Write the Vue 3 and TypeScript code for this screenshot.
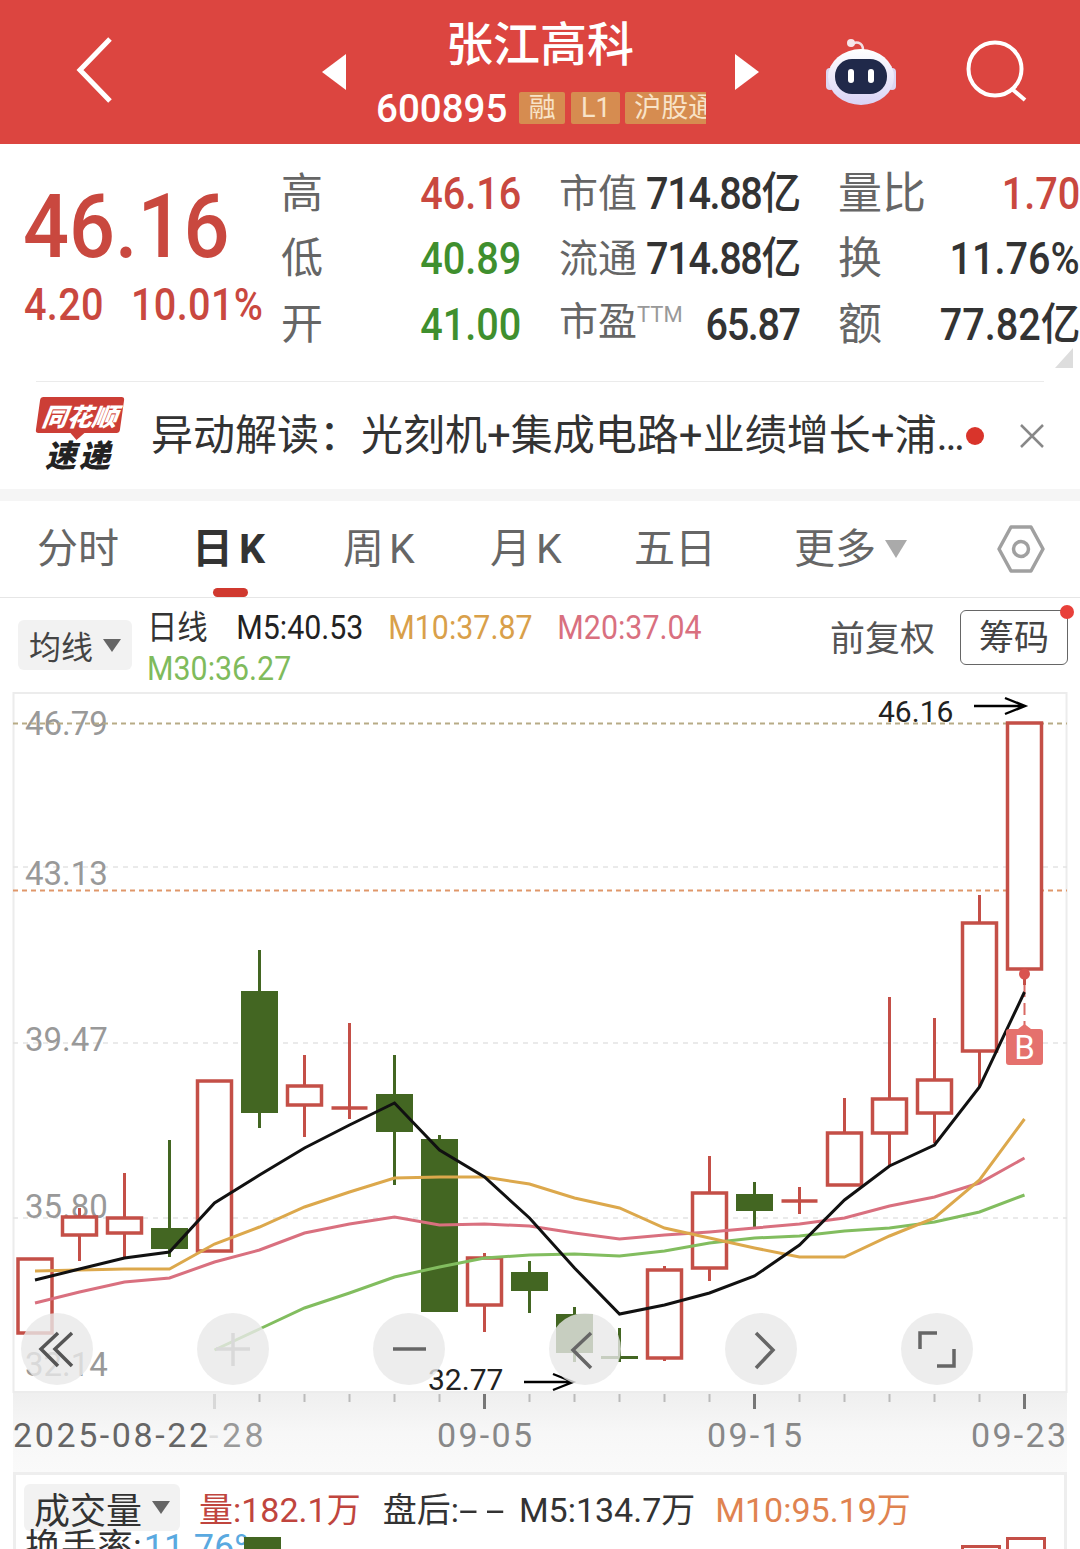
<script setup lang="ts">
interface Candle { x: number; up: boolean; top: number; bot: number; hi: number; lo: number }
const xs = [35, 79.5, 124.5, 169.5, 214.5, 259.5, 304.5, 349.5, 394.5, 439.5, 484.5, 529.5, 574.5, 619.5, 664.5, 709.5, 754.5, 799.5, 844.5, 889.5, 934.5, 979.5, 1024.5]
const raw: [boolean, number, number, number, number][] = [
  [true, 1259, 1333, 1259, 1333],
  [true, 1217, 1235, 1208, 1261],
  [true, 1218, 1233, 1173, 1258],
  [false, 1228, 1249, 1140, 1257],
  [true, 1081, 1251, 1081, 1251],
  [false, 991, 1113, 950, 1128],
  [true, 1086, 1105, 1055, 1137],
  [true, 1108, 1108, 1023, 1119],
  [false, 1094, 1132, 1055, 1185],
  [false, 1139, 1312, 1135, 1312],
  [true, 1258, 1305, 1253, 1332],
  [false, 1272, 1291, 1261, 1313],
  [false, 1314, 1353, 1307, 1362],
  [false, 1356, 1356, 1328, 1362],
  [true, 1270, 1358, 1266, 1361],
  [true, 1193, 1268, 1156, 1281],
  [false, 1194, 1211, 1182, 1227],
  [true, 1201, 1201, 1187, 1214],
  [true, 1133, 1185, 1098, 1185],
  [true, 1099, 1133, 997, 1166],
  [true, 1080, 1113, 1018, 1143],
  [true, 923, 1051, 895, 1087],
  [true, 723, 969, 723, 985],
]
const candles: Candle[] = raw.map((r, i) => ({ x: xs[i], up: r[0], top: r[1], bot: r[2], hi: r[3], lo: r[4] }))

const toPts = (ys: number[], from = 0) => ys.map((y, i) => `${xs[i + from]},${y}`).join(' ')
const m5 = toPts([1280, 1269, 1258, 1252, 1203, 1175, 1148, 1125, 1103, 1150, 1177, 1218, 1268, 1314, 1305, 1293, 1276, 1245, 1200, 1166, 1145, 1087, 992])
const m10 = toPts([1271, 1270, 1269, 1269, 1244, 1227, 1207, 1192, 1178, 1177, 1177, 1184, 1198, 1208, 1228, 1238, 1248, 1257, 1257, 1236, 1218, 1180, 1119])
const m20 = toPts([1303, 1292, 1282, 1278, 1262, 1250, 1233, 1224, 1217, 1225, 1224, 1226, 1233, 1239, 1235, 1232, 1228, 1224, 1218, 1206, 1197, 1183, 1158])
const m30 = toPts([1350, 1329, 1308, 1293, 1277, 1267, 1258, 1255, 1254, 1256, 1251, 1243, 1238, 1236, 1231, 1228, 1222, 1212, 1195], 4)

const ticks = xs.slice(4).map((x, i) => ({ x, major: (i % 6 === 0) }))
const yLabels = [
  { t: '46.79', y: 735 }, { t: '43.13', y: 885 }, { t: '39.47', y: 1051 }, { t: '35.80', y: 1218 }, { t: '32.14', y: 1376 },
]
const circles = [57, 233, 409, 585, 761, 937]
const stats = [
  [{ l: '高', v: '46.16', c: 'red' }, { l: '市值', v: '714.88亿', c: 'dark' }, { l: '量比', v: '1.70', c: 'red' }],
  [{ l: '低', v: '40.89', c: 'green' }, { l: '流通', v: '714.88亿', c: 'dark' }, { l: '换', v: '11.76%', c: 'dark' }],
  [{ l: '开', v: '41.00', c: 'green' }, { l: '市盈', v: '65.87', c: 'dark', sup: 'TTM' }, { l: '额', v: '77.82亿', c: 'dark' }],
]
</script>

<template>
  <div class="page">
    <header class="top">
      <svg class="back" width="38" height="66" viewBox="0 0 38 66"><polyline points="34,2 4,33 34,64" fill="none" stroke="#fff" stroke-width="5" /></svg>
      <span class="tri left"></span>
      <div class="center">
        <div class="title">张江高科</div>
        <div class="sub">
          <span class="code">600895</span>
          <span class="tag">融</span><span class="tag l1">L1</span><span class="tag hk">沪股通</span>
        </div>
      </div>
      <span class="tri right"></span>
      <svg class="bot" width="72" height="68" viewBox="0 0 72 68">
        <defs>
          <linearGradient id="hd" x1="0" y1="0" x2="0" y2="1"><stop offset="0" stop-color="#fff" /><stop offset="1" stop-color="#d9d3f5" /></linearGradient>
        </defs>
        <path d="M26 8 C30 2 38 4 38 12" fill="none" stroke="#f3dfe4" stroke-width="2.5" />
        <circle cx="26" cy="5" r="4" fill="#f6e6ea" />
        <rect x="1" y="30" width="8" height="22" rx="4" fill="#dcd6f2" />
        <rect x="63" y="30" width="8" height="22" rx="4" fill="#dcd6f2" />
        <ellipse cx="36" cy="39" rx="33" ry="28" fill="url(#hd)" />
        <rect x="10" y="21" width="52" height="35" rx="17" fill="#20294a" />
        <rect x="23" y="31" width="6" height="14" rx="3" fill="#fff" />
        <rect x="43" y="31" width="6" height="14" rx="3" fill="#fff" />
      </svg>
      <svg class="search" width="62" height="66" viewBox="0 0 62 66"><circle cx="29" cy="32" r="26.5" fill="none" stroke="#fff" stroke-width="4" /><line x1="46" y1="52" x2="59" y2="63" stroke="#fff" stroke-width="4" /></svg>
    </header>

    <section class="stats">
      <div class="price">
        <div class="big">46.16</div>
        <div class="chg"><span>4.20</span><span>10.01%</span></div>
      </div>
      <div class="grid">
        <template v-for="(row, i) in stats" :key="i">
          <div v-for="cell in row" :key="cell.l" class="cell">
            <span class="lab">{{ cell.l }}<sup v-if="cell.sup">{{ cell.sup }}</sup></span>
            <span class="val" :class="cell.c">{{ cell.v }}</span>
          </div>
        </template>
      </div>
      <span class="corner"></span>
    </section>

    <div class="rule"></div>

    <section class="news">
      <div class="logo">
        <div class="bubble"><span>同花顺</span></div>
        <div class="speed">速递</div>
      </div>
      <div class="headline">异动解读：光刻机+集成电路+业绩增长+浦…</div>
      <span class="dot"></span>
      <svg class="close" width="26" height="26" viewBox="0 0 26 26"><path d="M2 2 L24 24 M24 2 L2 24" stroke="#888" stroke-width="2.5" /></svg>
    </section>

    <nav class="tabs">
      <span class="tab">分时</span>
      <span class="tab active ks">日K<i class="bar"></i></span>
      <span class="tab ks">周K</span>
      <span class="tab ks">月K</span>
      <span class="tab">五日</span>
      <span class="tab more">更多<i class="caret"></i></span>
      <svg class="hex" width="50" height="50" viewBox="0 0 50 50">
        <path d="M15 3 H35 L47 25 L35 47 H15 L3 25 Z" fill="none" stroke="#a0a0a0" stroke-width="3.5" stroke-linejoin="round" />
        <circle cx="25" cy="25" r="7.5" fill="none" stroke="#a0a0a0" stroke-width="3.5" />
      </svg>
    </nav>

    <section class="legend">
      <div class="pill">均线<i class="caret dark"></i></div>
      <div class="mas">
        <span class="ri">日线</span>
        <span class="m5">M5:40.53</span>
        <span class="m10">M10:37.87</span>
        <span class="m20">M20:37.04</span>
        <span class="m30">M30:36.27</span>
      </div>
      <span class="fq">前复权</span>
      <span class="chip">筹码<i class="reddot"></i></span>
    </section>

    <svg class="chart" width="1080" height="780" viewBox="0 692 1080 780">
      <defs>
        <linearGradient id="band" x1="0" y1="0" x2="0" y2="1"><stop offset="0" stop-color="#efefef" /><stop offset="0.5" stop-color="#f7f7f7" /><stop offset="1" stop-color="#fafafa" /></linearGradient>
      </defs>
      <rect x="13" y="1393" width="1054" height="79" fill="url(#band)" />
      <rect x="13.5" y="693" width="1053" height="699" fill="#fff" stroke="#ececec" stroke-width="2" />
      <line x1="13" x2="1067" y1="867" y2="867" stroke="#e4e4e4" stroke-width="1.5" stroke-dasharray="5 5" />
      <line x1="13" x2="1067" y1="1043" y2="1043" stroke="#e4e4e4" stroke-width="1.5" stroke-dasharray="5 5" />
      <line x1="13" x2="1067" y1="1218" y2="1218" stroke="#e4e4e4" stroke-width="1.5" stroke-dasharray="5 5" />
      <text v-for="l in yLabels" :key="l.t" x="25" :y="l.y" class="ylab">{{ l.t }}</text>
      <line x1="13" x2="1067" y1="723.5" y2="723.5" stroke="#b7ab86" stroke-width="2" stroke-dasharray="5 4" />
      <line x1="13" x2="1067" y1="890.5" y2="890.5" stroke="#e0976a" stroke-width="2" stroke-dasharray="5 4" />

      <g v-for="(c, i) in candles" :key="i">
        <template v-if="c.up">
          <line :x1="c.x" :x2="c.x" :y1="c.hi" :y2="c.lo" stroke="#c44f47" stroke-width="3" />
          <line v-if="c.top === c.bot" :x1="c.x - 18" :x2="c.x + 18" :y1="c.top" :y2="c.top" stroke="#c44f47" stroke-width="3.5" />
          <rect v-else :x="c.x - 17" :y="c.top" width="34" :height="c.bot - c.top" fill="#fff" stroke="#c44f47" stroke-width="3.5" />
        </template>
        <template v-else>
          <line :x1="c.x" :x2="c.x" :y1="c.hi" :y2="c.lo" stroke="#436622" stroke-width="3" />
          <rect :x="c.x - 18.5" :y="c.top" width="37" :height="Math.max(c.bot - c.top, 3)" fill="#436622" />
        </template>
      </g>

      <line x1="1024.5" x2="1024.5" y1="985" y2="1030" stroke="#d96a64" stroke-width="2" stroke-dasharray="12 6" />
      <circle cx="1024.5" cy="974" r="5.5" fill="#d9534f" />
      <polyline :points="m30" fill="none" stroke="#82bd5f" stroke-width="3" />
      <polyline :points="m20" fill="none" stroke="#d9707f" stroke-width="3" />
      <polyline :points="m10" fill="none" stroke="#dca84c" stroke-width="3" />
      <polyline :points="m5" fill="none" stroke="#111" stroke-width="3" />

      <path d="M1024.5 1024 L1031 1029 H1040 Q1043 1029 1043 1032 V1062 Q1043 1065 1040 1065 H1009 Q1006 1065 1006 1062 V1032 Q1006 1029 1009 1029 H1018 Z" fill="#e5716d" />
      <text x="1024.5" y="1059" class="blab">B</text>

      <text x="878" y="722" class="mark">46.16</text>
      <path d="M974 706 H1024 M1005 698 L1025 706 L1005 714" fill="none" stroke="#000" stroke-width="2.4" />
      <text x="428" y="1390" class="mark">32.77</text>
      <path d="M524 1382 H572 M553 1374 L573 1382 L553 1390" fill="none" stroke="#000" stroke-width="2.4" />

      <circle v-for="cx in circles" :key="cx" :cx="cx" cy="1349" r="36" fill="#e8e8e8" fill-opacity="0.8" />
      <path d="M58 1333 L41 1349 L58 1366 M72 1333 L55 1349 L72 1366" fill="none" stroke="#555" stroke-width="3.5" />
      <path d="M233 1333 V1366 M216 1349 H250" stroke="#d9d9d9" stroke-width="3.5" />
      <path d="M393 1349 H426" stroke="#666" stroke-width="3.5" />
      <path d="M591 1333 L573 1350 L591 1368" fill="none" stroke="#666" stroke-width="3.5" />
      <path d="M756 1333 L773 1350 L756 1368" fill="none" stroke="#666" stroke-width="3.5" />
      <path d="M920 1349 V1333 H937 M954 1349 V1366 H937" fill="none" stroke="#666" stroke-width="3.5" />

      <line v-for="t in ticks" :key="t.x" :x1="t.x" :x2="t.x" y1="1394" :y2="t.major ? 1409 : 1402"
        :stroke="t.major ? (t.x < 300 ? '#d8d8d8' : '#777') : '#bbb'" :stroke-width="t.major ? 3 : 2" />

      <text x="13" y="1447" class="xlab first">2025-08-22</text>
      <text x="209" y="1447" class="xlab fade"><tspan class="faint">-</tspan>28</text>
      <text x="437" y="1447" class="xlab">09-05</text>
      <text x="707" y="1447" class="xlab">09-15</text>
      <text x="971" y="1447" class="xlab">09-23</text>
    </svg>

    <section class="vol">
      <div class="vol-row">
        <div class="pill vp">成交量<i class="caret dark"></i></div>
        <span class="vq">量:182.1万</span>
        <span class="vp2">盘后:<span class="dash">--</span></span>
        <span class="vm5">M5:134.7万</span>
        <span class="vm10">M10:95.19万</span>
      </div>
      <div class="rate">换手率:<b>11.76%</b></div>
      <i class="vb green" ></i>
      <i class="vb r1"></i>
      <i class="vb r2"></i>
    </section>
  </div>
</template>

<style>
html, body { margin: 0; background: #fff; overflow: hidden; }
</style>

<style scoped>
.page {
  width: 1080px;
  height: 1549px;
  overflow: hidden;
  background: #fff;
  font-family: Roboto, "Noto Sans CJK SC", sans-serif;
  color: #333;
}
.top {
  height: 144px;
  background: #dc4540;
  display: flex;
  align-items: center;
  padding-left: 76px;
  box-sizing: border-box;
}
.back { flex: none; margin-top: -4px; }
.tri { flex: none; width: 0; height: 0; border-top: 18px solid transparent; border-bottom: 18px solid transparent; }
.tri.left { border-right: 24px solid #fff; margin-left: 208px; }
.tri.right { border-left: 24px solid #fff; margin-left: 29px; }
.center { flex: none; width: 330px; margin-left: 30px; overflow: hidden; padding-top: 14px; box-sizing: border-box; height: 144px; }
.title { text-align: center; color: #fff; font-size: 47px; line-height: 62px; font-weight: 500; margin-left: -2px; }
.sub { display: flex; align-items: center; white-space: nowrap; margin-top: 12px; height: 40px; }
.code { color: #fff; font-size: 38.5px; margin-right: 12px; font-weight: 500; }
.tag {
  flex: none; width: 46px; height: 32px; line-height: 32px; background: #d68c50; color: #f8e3c8;
  font-size: 27px; border-radius: 2px; margin-right: 6px; text-align: center;
}
.tag.l1 { width: 49px; margin-right: 5px; }
.tag.hk { width: auto; padding-left: 9px; margin-right: 0; }
.bot { flex: none; margin-left: 66px; }
.search { flex: none; margin-left: 69px; margin-top: -4px; }

.stats { position: relative; height: 237px; display: flex; box-sizing: border-box; padding-left: 25px; }
.price { width: 256px; flex: none; padding-top: 37px; }
.big { font-size: 89px; line-height: 92px; color: #c9483f; font-weight: 500; white-space: nowrap; transform: scaleX(0.91); transform-origin: left; margin-left: -2px; }
.chg { display: flex; gap: 30px; font-size: 44px; line-height: 44px; color: #c9483f; margin-top: 10px; margin-left: -1px; font-weight: 500; white-space: nowrap; letter-spacing: 0.4px; transform: scaleX(0.9); transform-origin: left; }
.grid {
  display: grid;
  grid-template-columns: 240px 241px 242px;
  grid-auto-rows: 65.5px;
  column-gap: 38px;
  padding-top: 17px;
}
.cell { display: flex; justify-content: space-between; align-items: center; white-space: nowrap; }
.lab { font-size: 42px; color: #666; line-height: 50px; }
.cell:nth-child(3n + 2) .lab { font-size: 39px; }
.cell:nth-child(3n) .lab { font-size: 44px; }
.lab sup { font-size: 22px; color: #999; vertical-align: baseline; position: relative; top: -13px; }
.val { font-size: 44px; font-weight: 500; line-height: 50px; transform: scaleX(0.9); transform-origin: right; }
.cell:nth-child(3n + 2) .val { letter-spacing: -1.5px; margin-left: -40px; }
.red { color: #c9483f; }
.green { color: #3f8f2e; }
.dark { color: #333; }
.corner { position: absolute; right: 7px; top: 204px; width: 18px; height: 20px; background: #ddd; clip-path: polygon(100% 0, 100% 100%, 0 100%); }
.rule { height: 1px; background: #ebebeb; margin: 0 36px; }

.news { height: 107px; display: flex; align-items: center; padding-left: 34px; box-sizing: border-box; }
.logo { width: 92px; flex: none; display: flex; flex-direction: column; align-items: center; }
.bubble {
  position: relative; width: 84px; height: 36px; background: #cc3e36; border-radius: 3px; transform: skewX(-8deg);
  display: flex; align-items: center; justify-content: center;
}
.bubble::after {
  content: ""; position: absolute; left: 34px; bottom: -7px; border-left: 8px solid transparent; border-right: 8px solid transparent;
  border-top: 8px solid #cc3e36;
}
.bubble span { color: #fff; font-size: 25px; font-weight: 900; font-style: italic; white-space: nowrap; }
.speed { font-size: 31px; line-height: 36px; font-weight: 900; font-style: italic; color: #222; letter-spacing: 3px; margin-top: 6px; margin-right: 2px; }
.headline { flex: none; width: 811px; margin-left: 25px; font-size: 42px; color: #333; white-space: nowrap; line-height: 60px; }
.dot { flex: none; width: 18px; height: 18px; border-radius: 50%; background: #d9342b; margin-left: 4px; }
.close { flex: none; margin-left: 35px; }

.tabs {
  margin-top: 12px;
  box-shadow: 0 -12px 0 #f5f5f5;
  height: 97px;
  border-bottom: 1px solid #e6e6e6;
  box-sizing: border-box;
  display: grid;
  grid-template-columns: 159px 147px 147px 144px 160px 202px 50px;
  align-items: center;
  padding: 0 0 1px 37px;
}
.tab { position: relative; font-size: 41px; color: #666; line-height: 60px; white-space: nowrap; }
.tab.ks { letter-spacing: 5px; }
.tab.active { color: #333; font-weight: 700; margin-left: -4px; letter-spacing: 6px; }
.bar { position: absolute; left: 21px; top: 69px; width: 35px; height: 9px; border-radius: 5px; background: #d0392f; }
.more { display: flex; align-items: center; }
.caret { display: inline-block; width: 0; height: 0; border-left: 11px solid transparent; border-right: 11px solid transparent; border-top: 18px solid #aaa; margin-left: 9px; }
.caret.dark { border-left-width: 9px; border-right-width: 9px; border-top: 13px solid #666; margin-left: 10px; }
.hex { display: block; }

.legend { height: 94px; display: flex; align-items: flex-start; box-sizing: border-box; padding-left: 18px; }
.pill { flex: none; height: 50px; width: 114px; background: #f2f2f2; border-radius: 6px; display: flex; align-items: center; justify-content: center; font-size: 32px; color: #444; margin-top: 22px; }
.mas {
  flex: none; width: 650px; margin-left: 15px; display: flex; flex-wrap: wrap; column-gap: 27px;
  font-size: 33px; line-height: 41px; padding-top: 9px; white-space: nowrap; transform: scaleX(0.92); transform-origin: left;
}
.ri { color: #333; width: 70px; }
.m5 { color: #222; }
.m10 { color: #d9a04a; }
.m20 { color: #d9707f; }
.m30 { color: #7fbb5c; width: 300px; }
.fq { flex: none; margin-left: 33px; font-size: 35px; line-height: 50px; margin-top: 17px; color: #555; }
.chip {
  position: relative; flex: none; width: 108px; height: 55px; margin-left: 25px; margin-top: 12px; box-sizing: border-box;
  border: 1px solid #666; border-radius: 6px; font-size: 35px; line-height: 56px; text-align: center; color: #444;
}
.reddot { position: absolute; right: -7px; top: -6px; width: 14px; height: 14px; border-radius: 50%; background: #e8403a; }

.chart { display: block; }
.ylab { font-size: 33px; fill: #999; }
.mark { font-size: 30px; fill: #222; }
.blab { font-size: 33px; fill: #fff; text-anchor: middle; }
.xlab { font-size: 34px; fill: #888; letter-spacing: 2.3px; }
.xlab.first { fill: #666; letter-spacing: 2.6px; }
.xlab.fade { fill: #999; letter-spacing: 3.5px; }
.faint { fill: #ddd; }

.vol {
  position: relative; height: 77px; margin: 0 13px; box-sizing: border-box; background: #fff;
  border: 3px solid #eee; border-bottom: 0; overflow: hidden;
}
.vol-row { display: flex; align-items: center; height: 47px; margin-top: 9px; padding-left: 8px; white-space: nowrap; font-size: 34px; }
.pill.vp { margin-top: 0; width: 156px; height: 47px; font-size: 36px; color: #333; }
.vq { color: #c0453e; margin-left: 19px; }
.vp2 { color: #333; margin-left: 22px; }
.dash { display: inline-block; width: 47px; letter-spacing: 4px; transform: scaleX(2); transform-origin: left; white-space: nowrap; }
.vm5 { color: #333; margin-left: 13px; }
.vm10 { color: #e08350; margin-left: 20px; }
.rate { position: absolute; left: 9px; top: 53px; font-size: 36px; color: #333; white-space: nowrap; line-height: 40px; }
.rate b { font-weight: 400; color: #5aa9e0; margin-left: 2px; }
.vb { position: absolute; display: block; }
.vb.green { left: 228px; top: 62px; width: 37px; height: 20px; background: #436622; }
.vb.r1 { left: 945px; top: 70px; width: 34px; height: 20px; border: 3px solid #c44f47; }
.vb.r2 { left: 990px; top: 62px; width: 34px; height: 20px; border: 3px solid #c44f47; }
</style>
